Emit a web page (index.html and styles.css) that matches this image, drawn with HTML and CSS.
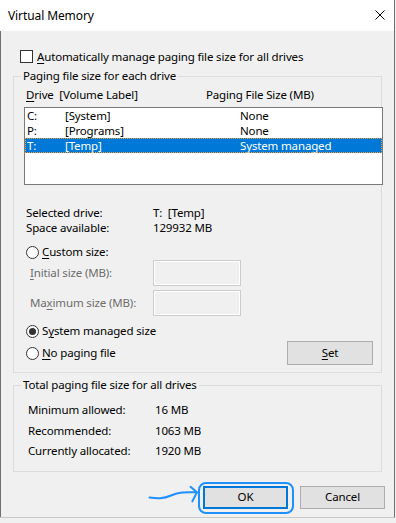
FILE: index.html
```html
<!DOCTYPE html>
<html>
<head>
<meta charset="utf-8">
<title>Virtual Memory</title>
<link rel="stylesheet" href="styles.css">
</head>
<body>
<div class="window">
  <div class="titlebar">
    <span class="title">Virtual Memory</span>
    <svg class="close" width="10" height="10" viewBox="0 0 10 10"><path d="M0.5 0.5 L9.5 9.5 M9.5 0.5 L0.5 9.5" stroke="#000" stroke-width="1" fill="none"/></svg>
  </div>
  <div class="body">
    <div class="check-row">
      <span class="checkbox"></span>
      <span><u>A</u>utomatically manage paging file size for all drives</span>
    </div>

    <fieldset class="group drives">
      <legend>Paging file size for each drive</legend>
      <div class="list-header">
        <span class="hcol1"><u>D</u>rive&nbsp; [Volume Label]</span>
        <span>Paging File Size (MB)</span>
      </div>
      <div class="listbox">
        <div class="lrow"><span class="c1">C:</span><span class="c2">[System]</span><span>None</span></div>
        <div class="lrow"><span class="c1">P:</span><span class="c2">[Programs]</span><span>None</span></div>
        <div class="lrow selected"><span class="c1">T:</span><span class="c2">[Temp]</span><span>System managed</span></div>
      </div>

      <div class="info">
        <span class="lbl">Selected drive:</span><span>T:&nbsp; [Temp]</span>
        <span class="lbl">Space available:</span><span>129932 MB</span>
      </div>

      <div class="radio-row custom"><span class="radio"></span><span><u>C</u>ustom size:</span></div>
      <div class="size-row first">
        <span class="dlbl"><u>I</u>nitial size (MB):</span><span class="tbox"></span>
      </div>
      <div class="size-row">
        <span class="dlbl">Ma<u>x</u>imum size (MB):</span><span class="tbox"></span>
      </div>
      <div class="radio-row sysman"><span class="radio checked"></span><span>S<u>y</u>stem managed size</span></div>
      <div class="set-row">
        <div class="radio-row"><span class="radio"></span><span><u>N</u>o paging file</span></div>
        <button class="btn set"><u>S</u>et</button>
      </div>
    </fieldset>

    <fieldset class="group totals">
      <legend>Total paging file size for all drives</legend>
      <div class="trow"><span class="tlbl">Minimum allowed:</span><span>16 MB</span></div>
      <div class="trow"><span class="tlbl">Recommended:</span><span>1063 MB</span></div>
      <div class="trow"><span class="tlbl">Currently allocated:</span><span>1920 MB</span></div>
    </fieldset>

    <div class="buttons">
      <span class="ok-wrap">
        <svg class="pointer" width="54" height="20" viewBox="0 0 54 20"><path d="M2.5 12.5 C10 13.5 16 14 24 10.5 S38 7 49 7.3" stroke="#1e90ff" stroke-width="2" fill="none" stroke-linecap="round"/><path d="M43.5 1.8 L50 7.3 L45.3 16.4" stroke="#1e90ff" stroke-width="2" fill="none" stroke-linecap="round" stroke-linejoin="round"/></svg>
        <button class="btn ok">OK</button>
      </span>
      <button class="btn cancel">Cancel</button>
    </div>
  </div>
</div>
</body>
</html>
```

FILE: styles.css
```css
* { box-sizing: border-box; }
html, body { margin: 0; padding: 0; }
body {
  background: #f0f0f0;
  font-family: "Noto Sans", "Open Sans", sans-serif;
  font-size: 11.5px;
  letter-spacing: -0.15px;
  line-height: 16px;
  color: #000;
}
u { text-decoration: underline; text-underline-offset: 2px; }

.window {
  width: 395px;
  height: 518px;
  border-right: 1px solid #707070;
  border-bottom: 1px solid #c8c8c8;
  background: #f0f0f0;
  display: flex;
  flex-direction: column;
}
.titlebar {
  height: 31px;
  flex: none;
  background: #fff;
  display: flex;
  align-items: center;
  justify-content: space-between;
  padding: 0 9px 0 8px;
}
.title { font-size: 12px; letter-spacing: -0.1px; }
.close { display: block; margin-top: -1px; }

.body {
  flex: 1;
  border-left: 1px solid #707070;
}

.check-row {
  margin: 19px 0 0 19px;
  height: 13px;
  display: flex;
  align-items: center;
  gap: 4px;
}
.checkbox {
  width: 13px; height: 13px;
  border: 1px solid #333;
  background: #fff;
  flex: none;
}

.group {
  margin: 0 0 0 12px;
  padding: 0;
  width: 369px;
  border: 1px solid #dcdcdc;
  min-width: 0;
}
.group legend {
  padding: 0 2px;
  margin-left: 7px;
  line-height: 16px;
}
.drives { margin-top: 5px; padding: 0 0 7px 0; }

.list-header {
  display: flex;
  margin-top: 3px;
  padding-left: 12px;
}
.hcol1 { width: 180px; }

.listbox {
  margin: 4px 0 0 10px;
  width: 359px;
  height: 78px;
  border: 1px solid #7a7a7a;
  background: #fff;
}
.lrow {
  height: 15px;
  line-height: 15px;
  display: flex;
  padding-left: 2px;
}
.c1 { width: 38px; }
.c2 { width: 175px; }
.lrow.selected {
  background: #0078d7;
  color: #fff;
  outline: 1px dotted #f0a030;
  outline-offset: -1px;
}

.info {
  display: grid;
  grid-template-columns: 127px auto;
  margin-top: 20px;
  padding-left: 12px;
  line-height: 15px;
}

.radio-row {
  display: flex;
  align-items: center;
  gap: 3px;
  height: 16px;
  padding-left: 12px;
}
.radio {
  width: 13px; height: 13px;
  border: 1px solid #333;
  border-radius: 50%;
  background: #fff;
  flex: none;
  display: flex;
  align-items: center;
  justify-content: center;
}
.radio.checked::after {
  content: "";
  width: 7px; height: 7px;
  border-radius: 50%;
  background: #333;
}
.custom { margin-top: 9px; }

.size-row {
  display: flex;
  align-items: center;
  padding-left: 16px;
  margin-top: 4px;
}
.size-row.first { margin-top: 0; }
.dlbl { width: 123px; color: #6d6d6d; }
.tbox {
  width: 88px;
  height: 26px;
  border: 1px solid #cccccc;
  box-shadow: inset 0 0 0 1px #fff;
  background: #f0f0f0;
}
.sysman { margin-top: 7px; }

.set-row {
  display: flex;
  align-items: center;
  justify-content: space-between;
  margin-top: 2px;
  padding-right: 8px;
}
.set-row .radio-row { padding-left: 12px; }

.btn {
  font: inherit;
  letter-spacing: inherit;
  color: #000;
  background: #e1e1e1;
  border: 1px solid #adadad;
  border-radius: 0;
  padding: 0;
  margin: 0;
}
.set { width: 86px; height: 24px; }

.totals { margin-top: 4px; padding: 0 0 9px 0; }
.trow {
  display: flex;
  line-height: 20.5px;
  padding-left: 14px;
}
.trow:first-of-type { margin-top: 7px; }
.tlbl { width: 127px; }

.buttons {
  display: flex;
  justify-content: flex-end;
  gap: 12px;
  margin-top: 14px;
  padding-right: 9px;
}
.ok-wrap { position: relative; display: block; }
.ok-wrap::after {
  content: "";
  position: absolute;
  left: -5px; right: -6px; top: -4px; bottom: -5px;
  border: 2px solid #1e90ff;
  border-radius: 8px;
  pointer-events: none;
}
.pointer { position: absolute; left: -56px; top: -1px; }
.ok { width: 85px; height: 23px; border: 2px solid #0078d7; display: block; }
.cancel { width: 85px; height: 23px; }
```
